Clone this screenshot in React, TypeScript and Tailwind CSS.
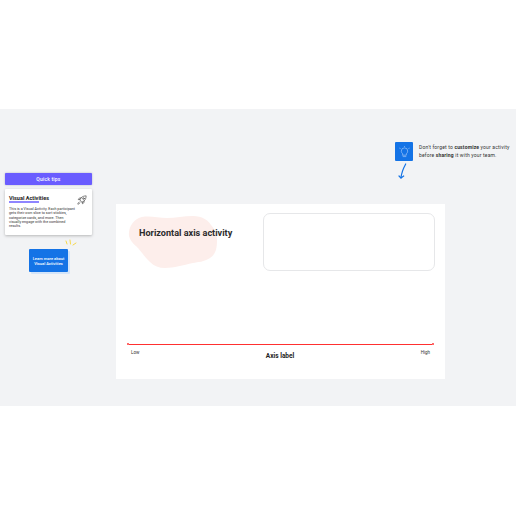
const font = { fontFamily: "Roboto, 'Liberation Sans', sans-serif" };

const tipLines = [
  "This is a Visual Activity. Each participant",
  "gets their own slice to sort stickies,",
  "categorize cards, and more. Then",
  "visually engage with the combined",
  "results.",
];

function RocketIcon() {
  return (
    <svg width="10" height="10" viewBox="0 0 24 24" fill="none" stroke="#333" strokeWidth="1.4" strokeLinecap="round" strokeLinejoin="round">
      <path d="M9 15 7 11c2-5 7-9 15-9 0 8-4 13-9 15z" />
      <circle cx="15.5" cy="8.5" r="2" />
      <path d="M7 11H3l3-4h4M13 17v4l4-3v-4" />
      <path d="M5 17c-2 1-3 3-3 5 2 0 4-1 5-3" />
    </svg>
  );
}

function BulbIcon() {
  return (
    <svg width="11" height="12" viewBox="0 0 24 26" fill="none" stroke="#a9ccf8" strokeWidth="1.4" strokeLinecap="round" strokeLinejoin="round">
      <path d="M8 17c-2-1.500-3-4-3-6a7 7 0 0 1 14 0c0 2-1 4.500-3 6v3H8z" />
      <path d="M9 23h6" />
      <path d="M1 4l2 2M23 4l-2 2M12 0v1" />
    </svg>
  );
}

export default function App() {
  return (
    <div className="w-[516px] h-[516px] bg-white overflow-hidden pt-[109px]" style={font}>
      <div className="relative w-[516px] h-[297px] bg-[#f2f3f5]">
        {/* Quick tips */}
        <div className="absolute left-[5px] top-[64px] w-[87px] flex flex-col items-center">
          <div className="w-full h-[12px] pt-[1px] bg-[#6a5cff] rounded-[1px] shadow-[0_0_2px_rgba(60,60,120,0.4)] flex items-center justify-center text-white text-[5px] font-medium tracking-[0.2px]">
            Quick tips
          </div>
          <div className="w-full h-[46px] mt-[4px] bg-white rounded-[1px] shadow-[0_1px_3px_rgba(0,0,0,0.25)] pt-[5px] pl-[4px] pr-[3px] relative">
            <div className="text-[5.500px] leading-[8px] font-bold text-[#222] w-fit">Visual Activities</div>
            <div className="w-[30px] h-[2px] bg-[#8f85ff] -mt-[1px]" />
            <div className="mt-[4px] text-[3.700px] leading-[4.300px] text-[#333] whitespace-nowrap">
              {tipLines.map((line) => (
                <div key={line}>{line}</div>
              ))}
            </div>
            <div className="absolute right-[5px] top-[6px]">
              <RocketIcon />
            </div>
          </div>
          <div className="relative mt-[14px] w-[39px] h-[23px] bg-[#1473e6] rounded-[1px] shadow-[2px_2px_0_#d3e4f9] flex items-center justify-center text-center text-white text-[4px] leading-[5px] font-medium">
            Learn more about
            <br />
            Visual Activities
            <svg className="absolute left-[36px] -top-[10px]" width="12" height="8" viewBox="0 0 12 8" fill="none" stroke="#f6d84a" strokeWidth="1" strokeLinecap="round">
              <path d="M1 2l1 3M5 1l.5 4M11 4 8 6" />
            </svg>
          </div>
        </div>

        {/* Customize hint */}
        <div className="absolute left-[395px] top-[33px] flex items-start gap-[6px]">
          <div className="w-[18px] h-[19px] bg-[#1473e6] rounded-[1px] flex items-center justify-center">
            <BulbIcon />
          </div>
          <div className="text-[5px] leading-[7.500px] text-[#333] tracking-[0.17px] whitespace-nowrap pt-[2px]">
            <div>
              Don't forget to <b>customize</b> your activity
            </div>
            <div>
              before <b>sharing</b> it with your team.
            </div>
          </div>
        </div>
        <svg className="absolute left-[397px] top-[54px]" width="12" height="17" viewBox="0 0 12 17" fill="none" stroke="#1473e6" strokeWidth="1.2" strokeLinecap="round" strokeLinejoin="round">
          <path d="M8.700 1C6.500 5 4.500 9 4 15" />
          <path d="M2 13l2 2 2.700-2" />
        </svg>

        {/* Board */}
        <div className="absolute left-[116px] top-[95px] w-[329px] h-[175px] bg-white flex flex-col">
          <div className="relative flex items-start h-[66px] pt-[9px] pl-[147px]">
            <svg className="absolute left-[12px] top-[12px]" width="90" height="53" viewBox="0 0 90 53" fill="#fdeeeb">
              <path d="M1 16C2 8 8 1 17 .5 25 0 31 2 39 2 47 2 56 0 65 0 74 0 80 4 83 9 87 14 89 18 89 24 89 32 88 38 82 42 76 46 70 46 65 47 55 49 46 52 37 52 31 52 26 50 22 46 17 41 14 37 10 32 6 28 0 24 1 16Z" />
            </svg>
            <div className="absolute left-[23px] top-[23px] text-[9.100px] leading-[12px] font-bold text-[#2b2b2b] whitespace-nowrap">
              Horizontal axis activity
            </div>
            <div className="relative w-[172px] h-[58px] border border-[#e6e7e9] rounded-[7px]" />
          </div>
          <div className="mt-[74px] mx-[11px] relative h-[1px] bg-[#ff3030]">
            <div className="absolute left-0 -top-[1px] w-[2px] h-[2px] bg-[#ff6b6b]" />
            <div className="absolute right-0 -top-[1px] w-[2px] h-[2px] bg-[#ff6b6b]" />
          </div>
          <div className="mx-[15px] mt-[5px] flex justify-between">
            <span className="text-[4.500px] leading-[6px] text-[#333]">Low</span>
            <span className="text-[6.500px] leading-[10px] font-bold text-[#222] mt-[1px]">Axis label</span>
            <span className="text-[4.500px] leading-[6px] text-[#333]">High</span>
          </div>
        </div>
      </div>
    </div>
  );
}
